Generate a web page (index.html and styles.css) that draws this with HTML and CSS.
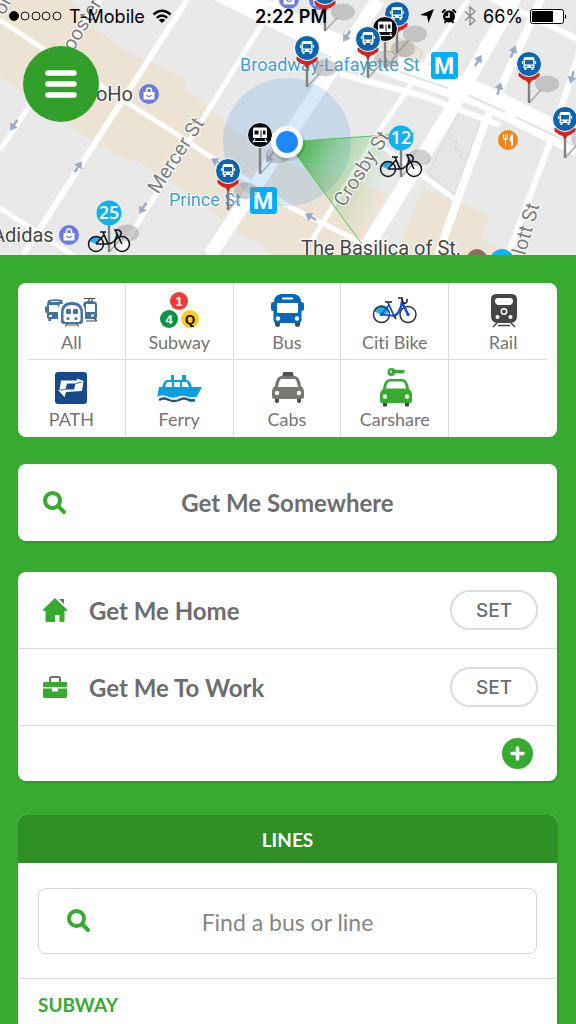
FILE: index.html
```html
<!DOCTYPE html>
<html lang="en">
<head>
    <meta charset="UTF-8">
    <meta name="viewport" content="width=device-width, initial-scale=1.0">
    <title>Transit</title>
    <link rel="stylesheet" href="styles.css">
</head>
<body>

    <header class="hero">
        <svg class="map" viewBox="0 0 576 255" preserveAspectRatio="xMidYMid slice">
            <defs>
                <linearGradient id="beam" gradientUnits="userSpaceOnUse" x1="290" y1="145" x2="385" y2="190">
                    <stop offset="0" stop-color="#2fae2f" stop-opacity="0.95"/>
                    <stop offset="0.45" stop-color="#4fb94a" stop-opacity="0.4"/>
                    <stop offset="1" stop-color="#8fd08a" stop-opacity="0"/>
                </linearGradient>
                <g id="pin-shadow">
                    <path d="M0 39 L12 26" stroke="#a9a9a9" stroke-width="1.5"/>
                    <ellipse cx="18" cy="20" rx="12" ry="8.5" fill="#8a8a8a" fill-opacity="0.4"/>
                    <path d="M0 12 V39" stroke="#808080" stroke-width="2.4"/>
                </g>
                <g id="pin-bus">
                    <use href="#pin-shadow"/>
                    <path d="M-10 9 Q0 16 10 9 L10 12 Q6 16 2 16.500 L0 20 L-2 16.500 Q-6 16 -10 12 Z" fill="#d8201f" stroke="#d8201f"/>
                    <circle r="12.500" fill="#0a64ae" stroke="#fff" stroke-width="1"/>
                    <path fill="#fff" fill-rule="evenodd" d="M-3.500 -7 h7 q2 0 2 2 v9 h-1 v2 h-2 v-2 h-5 v2 h-2 v-2 h-1 v-9 q0 -2 2 -2 z M-4 -4 v4.500 h8 v-4.500 z M-3.800 1.800 v1.200 h1.800 v-1.200 z M2 1.800 v1.200 h1.800 v-1.200 z"/>
                    <path d="M-6.500 -3 v3 M6.500 -3 v3" stroke="#fff" stroke-width="1.200"/>
                </g>
                <g id="pin-train">
                    <use href="#pin-shadow"/>
                    <circle r="12.500" fill="#0a0d14" stroke="#fff" stroke-width="1"/>
                    <path fill="#fff" fill-rule="evenodd" d="M-5.500 -7.500 h11 q1.500 0 1.500 1.500 v9 h-14 v-9 q0 -1.500 1.500 -1.500 z M-5.500 -4.500 v4 h4 v-4 z M0.500 -4.500 v7 h1 v-7 z M3 -4.500 v4 h2.500 v-4 z"/>
                    <path d="M-5 4 L-7 7.500 M5 4 L7 7.500 M-6 6.500 H6" stroke="#fff" stroke-width="1.200"/>
                </g>
                <g id="map-bike" fill="none" stroke="#10131f">
                    <path d="M-20 28 A7.500 7.500 0 0 1 -8 25 L-13 31 Z" fill="#27aee8" stroke="none"/>
                    <circle cx="-13" cy="31" r="7.500" stroke-width="1.500"/>
                    <circle cx="13" cy="31" r="7.500" stroke-width="1.500"/>
                    <path d="M-13 31 L-5 22 L-1 31 H-13 M-1 31 Q7 30 8 21 L13 31 M-6 19 L-1 31 M8 21 L6 17 H10 M10 17 q4 3 1 6 M-9 19 H-3" stroke-width="1.600"/>
                </g>
                <g id="arrow">
                    <path d="M0 6 V-2" stroke="#9aabc4" stroke-width="2.500"/>
                    <path d="M0 -7 L4.500 0 H-4.500 Z" fill="#9aabc4"/>
                </g>
                <g id="shop">
                    <circle r="10" fill="#6a7be0"/>
                    <path d="M-5.500 -2 H5.500 V5.500 H-5.500 Z" fill="#fff"/>
                    <path d="M-2.500 -2 v-1.500 a2.500 2.500 0 0 1 5 0 v1.500" fill="none" stroke="#fff" stroke-width="1.500"/>
                    <path d="M-2.500 1 q2.500 3 5 0" fill="none" stroke="#6a7be0" stroke-width="1.200"/>
                </g>
            </defs>

            <rect width="576" height="255" fill="#e9e9e9"/>

            <!-- commercial blocks -->
            <g fill="#ede3d4">
                <path d="M0 0 H70 L100 32 L125 50 L187 80 L184 86 L228 125 L300 170 L345 175 L388 195 L362 238 L345 255 H273 L233 228 L165 178 L133 158 L131 162 L93 142 L40 104 L0 77 Z"/>
                <path d="M424 188 L489 215 L481 238 L505 250 V255 H395 Z"/>
            </g>
            <path d="M459 112 L481 119 L455 195 L428 173 Z" fill="#e6e6e6" stroke="#d6d6d6"/>
            <path d="M449 138 L457 142 L454 148 L462 152 L459 158" fill="none" stroke="#d6d6d6"/>

            <!-- streets -->
            <g fill="none" stroke="#fff" stroke-width="5">
                <path d="M0 20 L45 50 L170 130 L217 161 L290 207 L362 243"/>
                <path d="M100 0 L0 150"/>
                <path d="M187 0 L23 255" stroke-width="6"/>
                <path d="M277 0 L118 255"/>
                <path d="M378 0 L210 255" stroke-width="14"/>
                <path d="M468 0 L380 130 L312 240"/>
                <path d="M516 -5 L450 112 L362 255" stroke-width="14"/>
                <path d="M543 -5 L484 125 L438 255" stroke-width="8"/>
                <path d="M580 50 L549 145 L508 255" stroke-width="6"/>
                <path d="M0 208 L77 258"/>
                <path d="M370 138 L419 173 L456 200"/>
                <path d="M210 -15 L330 43 L420 75 L480 95 L580 145" stroke-width="24"/>
                <path d="M340 74 L420 95 L500 125" stroke-width="6"/>
                <path d="M485 -5 L580 40" stroke-width="6"/>
            </g>
            <path d="M400 72 L448 88 M468 95 L505 112 M516 117 L580 148" fill="none" stroke="#e4e4e4" stroke-width="2"/>
            <path d="M390 36 L410 42 L423 52 L418 60 L385 50 Z" fill="#ede3d4" stroke="#e0cdb2"/>

            <!-- current location range -->
            <circle cx="287" cy="142" r="64" fill="#4f9be8" fill-opacity="0.22"/>
            <path d="M287 142 L415 133 L362 244 Z" fill="url(#beam)"/>
            <path d="M362 244 L287 142 L415 133" fill="none" stroke="#5cbf5c"/>

            <use href="#arrow" transform="translate(14 125) rotate(213)"/>
            <use href="#arrow" transform="translate(78 167) rotate(33)"/>
            <use href="#arrow" transform="translate(143 208) rotate(213)"/>
            <use href="#arrow" transform="translate(347 36) rotate(213)"/>
            <use href="#arrow" transform="translate(478 61) rotate(30)"/>
            <use href="#arrow" transform="translate(513 52) rotate(22)"/>
            <use href="#arrow" transform="translate(499 89) rotate(15)"/>
            <use href="#arrow" transform="translate(572 77) rotate(195)"/>
            <use href="#arrow" transform="translate(311 217) rotate(-60)"/>
            <use href="#arrow" transform="translate(217 162) rotate(-60)"/>
            <use href="#arrow" transform="translate(270 157) rotate(213)"/>

            <g class="map-label street">
                <text transform="translate(73 52) rotate(-59)">ooster St</text>
                <text transform="translate(158 195) rotate(-57)">Mercer St</text>
                <text transform="translate(344 208) rotate(-57)">Crosby St</text>
                <text transform="translate(525 256) rotate(-74)">lott St</text>
                <text transform="translate(4 16) rotate(-62)">on</text>
            </g>
            <g class="map-label">
                <text x="84" y="101">SoHo</text>
                <text x="-8" y="242">Adidas</text>
                <text x="301" y="255">The Basilica of St.</text>
            </g>
            <g class="map-label station">
                <text x="240" y="71">Broadway-Lafayette St</text>
                <text x="169" y="206">Prince St</text>
            </g>

            <use href="#shop" x="149" y="94"/>
            <use href="#shop" x="69" y="235"/>
            <use href="#shop" x="289" y="-1"/>
            <use href="#shop" x="319" y="0"/>
            <circle cx="508" cy="140" r="10" fill="#f5841f"/>
            <path d="M503 134 v4 q0 2 2 2 v6 h1 v-6 q2 0 2 -2 v-4 h-1 v4 h-1 v-4 h-1 v4 h-1 v-4 z M513 134 v12 h-2 v-5 h-1 q-1 -6 3 -7 z" fill="#fff"/>
            <circle cx="477" cy="259" r="10" fill="#8d6e63"/>
            <circle cx="502" cy="261" r="12" fill="#12b1ea"/>

            <g>
                <rect x="431" y="52" width="27" height="27" rx="3" fill="#00aeff"/>
                <rect x="250" y="187" width="27" height="27" rx="3" fill="#00aeff"/>
                <text class="metro" x="444" y="74">M</text>
                <text class="metro" x="263" y="209">M</text>
            </g>

            <use href="#pin-bus" x="325" y="-8"/>
            <use href="#pin-bus" x="397" y="14"/>
            <use href="#pin-train" x="385" y="29"/>
            <use href="#pin-bus" x="368" y="39"/>
            <use href="#pin-bus" x="307" y="48"/>
            <use href="#pin-bus" x="529" y="64"/>
            <use href="#pin-bus" x="565" y="119"/>
            <use href="#pin-train" x="260" y="135"/>
            <use href="#pin-bus" x="228" y="171"/>

            <use href="#pin-shadow" x="401" y="138"/>
            <use href="#map-bike" x="401" y="138"/>
            <circle cx="401" cy="138" r="12.500" fill="#12b1ea"/>
            <text class="count" x="401" y="144">12</text>
            <use href="#pin-shadow" x="109" y="213"/>
            <use href="#map-bike" x="109" y="213"/>
            <circle cx="109" cy="213" r="12.500" fill="#12b1ea"/>
            <text class="count" x="109" y="219">25</text>

            <circle cx="288" cy="144" r="17" fill="#000" fill-opacity="0.12"/>
            <circle cx="287" cy="142" r="16" fill="#fff"/>
            <circle cx="287" cy="142" r="11" fill="#1e88ff"/>
        </svg>

        <div class="overlay">
            <div class="status">
                <div class="status-side">
                    <svg width="54" height="12" viewBox="0 0 54 12" fill="none" stroke="#111">
                        <circle cx="6" cy="6" r="4.500" fill="#000"/>
                        <circle cx="17" cy="6" r="4"/>
                        <circle cx="28" cy="6" r="4"/>
                        <circle cx="38" cy="6" r="4"/>
                        <circle cx="49" cy="6" r="4"/>
                    </svg>
                    <span>T-Mobile</span>
                    <svg width="20" height="15" viewBox="0 0 20 15" fill="none" stroke="#000" stroke-width="2.400">
                        <path d="M1.500 5.500 Q10 -2 18.500 5.500"/>
                        <path d="M4.800 8.800 Q10 4.200 15.200 8.800"/>
                        <path d="M10 14 L6.800 11 Q10 8.400 13.200 11 Z" fill="#000" stroke="none"/>
                    </svg>
                </div>
                <time class="clock">2:22 PM</time>
                <div class="status-side status-right">
                    <svg width="14" height="14" viewBox="0 0 14 14"><path d="M14 0 L8.500 14 L7 7 L0 6 Z"/></svg>
                    <svg width="16" height="16" viewBox="0 0 16 16">
                        <circle cx="8" cy="8.500" r="6"/>
                        <path d="M1 4.500 L4.500 1.500 M15 4.500 L11.500 1.500 M3.500 15 L5 13 M12.500 15 L11 13" stroke="#000" stroke-width="1.800"/>
                        <path d="M8 4.500 V9 H4.500" fill="none" stroke="#fff" stroke-width="1.500"/>
                    </svg>
                    <svg width="12" height="20" viewBox="0 0 12 20"><path d="M1 5.500 L11 14.500 L6 19 V1 L11 5.500 L1 14.500" fill="none" stroke="#8d8d8d" stroke-width="1.500"/></svg>
                    <span>66%</span>
                    <svg width="38" height="15" viewBox="0 0 38 15">
                        <rect x="0.500" y="0.500" width="33" height="14" rx="2" fill="#fff" stroke="#000"/>
                        <rect x="2" y="2" width="21" height="11"/>
                        <path d="M35 5 q2.500 2.500 0 5 z"/>
                    </svg>
                </div>
            </div>
            <button class="menu" aria-label="Menu">
                <svg width="32" height="30" viewBox="0 0 32 30"><path d="M3 4 H29 M3 15 H29 M3 26 H29" stroke="#fff" stroke-width="5.500" stroke-linecap="round"/></svg>
            </button>
        </div>
    </header>

    <main>
        <nav class="card modes">
            <a class="mode" href="#all">
                <svg class="mode-icon" viewBox="0 0 64 40">
                    <g fill="#44739f">
                        <path fill-rule="evenodd" d="M10 10 q7 -1.500 13 0 l1 4 h-3 l-2 4 v11 h-9 q-2 0 -2 -2 v-4 q-2 0 -2 -2 v-4 l2 -1 q0 -5 2 -6 z M12 11 v1 h8 v-1 z M10 15 v7 h9 v-7 z M10 25 v2 h3 v-2 z"/>
                        <path fill-rule="evenodd" d="M25 34 q-3 0 -3 -3 v-8 q0 -11 11 -11 t11 11 v8 q0 3 -3 3 z M27 32 h12 q2.500 0 2.500 -3 v-6 q0 -8 -8.500 -8 t-8.500 8 v6 q0 3 2.500 3 z"/>
                        <rect x="27" y="19" width="5" height="5" rx="1"/>
                        <rect x="34" y="19" width="5" height="5" rx="1"/>
                        <circle cx="29" cy="28.500" r="1.500"/>
                        <circle cx="37" cy="28.500" r="1.500"/>
                        <path fill-rule="evenodd" d="M45 12 q6 -2 12 0 l1 2 v13 q0 2 -2 2 h-10 v-6 q0 -6 -2 -8 z M47 14 v8 h9 v-8 z M52 24.500 v2 h3 v-2 z"/>
                    </g>
                    <path d="M45 8.500 H56 M50 8.500 v3 M53 8.500 v3 M10 29 v2 M11.500 29 v2 M28 34 L26 36.500 M38 34 L40 36.500 M27 35 H39 M47 31 H57 M55 28 L58 31" fill="none" stroke="#4a4a4a" stroke-width="1.200"/>
                </svg>
                <span>All</span>
            </a>
            <a class="mode" href="#subway">
                <svg class="mode-icon" viewBox="0 0 64 40">
                    <circle cx="32" cy="11" r="9" fill="#ee3a36"/>
                    <circle cx="22" cy="29" r="9" fill="#0a9640"/>
                    <circle cx="43" cy="29" r="9" fill="#fccb15"/>
                    <text class="bullet" x="32" y="16">1</text>
                    <text class="bullet" x="22" y="34">4</text>
                    <text class="bullet bullet-dark" x="43" y="34">Q</text>
                </svg>
                <span>Subway</span>
            </a>
            <a class="mode" href="#bus">
                <svg class="mode-icon" viewBox="0 0 64 40">
                    <path d="M20 32 h5 v3 q0 2 -2.500 2 t-2.500 -2 z M40 32 h5 v3 q0 2 -2.500 2 t-2.500 -2 z" fill="#4a4a4a"/>
                    <path fill="#0868b5" fill-rule="evenodd" d="M26 4 h13 q7 1 7 8 q3 0 3 2 v5 q0 2 -2.500 2 v9 q0 3 -3 3 h-22 q-3 0 -3 -3 v-9 q-2.500 0 -2.500 -2 v-5 q0 -2 3 -2 q0 -7 7 -8 z M27 7.500 v2 h11 v-2 z M22 13 v9 q0 1 1 1 h19 q1 0 1 -1 v-9 z"/>
                    <circle cx="23" cy="28.500" r="2.200" fill="#fff"/>
                    <circle cx="42" cy="28.500" r="2.200" fill="#fff"/>
                </svg>
                <span>Bus</span>
            </a>
            <a class="mode" href="#citibike">
                <svg class="mode-icon" viewBox="0 0 64 40" fill="none">
                    <path d="M10.500 21 A8.500 8.500 0 0 1 25 18 L25 23 L19 25 Z" fill="#1fb3e8"/>
                    <circle cx="18.500" cy="24.500" r="8" stroke="#333" stroke-width="1.500"/>
                    <circle cx="45" cy="24.500" r="8" stroke="#333" stroke-width="1.500"/>
                    <path d="M18.500 24.500 L26 15 L31 26 Z M26 15 L25 12" stroke="#1550d8" stroke-width="1.800"/>
                    <path d="M30 26 Q37 25 39 12 L45 24.500" stroke="#1550d8" stroke-width="2.500"/>
                    <circle cx="18.500" cy="24.500" r="1.700" fill="#1550d8"/>
                    <circle cx="45" cy="24.500" r="1.700" fill="#1550d8"/>
                    <path d="M22 12 H29 M35 8 h4 l1 5 M40 13 q5 1 4 -4 M31 26 l2 3" stroke="#222" stroke-width="1.600"/>
                </svg>
                <span>Citi Bike</span>
            </a>
            <a class="mode" href="#rail">
                <svg class="mode-icon" viewBox="0 0 64 40">
                    <path fill="#454545" fill-rule="evenodd" d="M26 4 h14 q6 0 6 5 v17 q0 6 -6 7 h-14 q-6 -1 -6 -7 v-17 q0 -5 6 -5 z M27 8 q-3 0 -3 3 t3 4 h12 q3 -1 3 -4 t-3 -3 z"/>
                    <circle cx="33" cy="21.500" r="2.700" fill="none" stroke="#fff" stroke-width="1.500"/>
                    <circle cx="26.500" cy="27" r="2" fill="#fff"/>
                    <circle cx="39.500" cy="27" r="2" fill="#fff"/>
                    <path d="M26 33 L22 37 M40 33 L44 37 M27 35.500 H39" stroke="#454545" stroke-width="1.500"/>
                </svg>
                <span>Rail</span>
            </a>
            <a class="mode" href="#path">
                <svg class="mode-icon" viewBox="0 0 64 40">
                    <rect x="16" y="5" width="32" height="32" rx="3" fill="#174a8c"/>
                    <path fill="#fff" fill-rule="evenodd" d="M22 13.500 H38 V11.500 L44.500 14 L43 24 L27 25 L25.500 30 L19 23 H20.500 Z M28 16.500 L26.500 22.500 H35 L36.500 16.500 Z"/>
                    <path d="M20.500 23 L27 22.500 M36.500 16.500 L43 15" stroke="#174a8c" stroke-width="0.800"/>
                </svg>
                <span>PATH</span>
            </a>
            <a class="mode" href="#ferry">
                <svg class="mode-icon" viewBox="0 0 64 40">
                    <path fill="#0b9fe0" fill-rule="evenodd" d="M12 20 h3 l2 -5 q1 -2 3 -2 h4 v-5 h3 v5 h8 v-5 h4 v5 q3 0 4 2 l2 5 h10 l-6 11 q-4 1 -8 0 q-5 -2 -10 0 q-6 2 -10 0 q-5 -2 -11 0 z M20 15 l-2 5 h7 v-5 z M27 15 v5 h6 v-5 z M35 15 v5 h7 l-2 -5 z"/>
                    <path d="M10 30.500 q6 -3 11 0 q5 2 10 0 q5 -2 10 0 q4 1 8 0" fill="none" stroke="#fff" stroke-width="1.500"/>
                    <path d="M12 33 q5 -3 10 0 q5 2 10 0 q5 -3 10 0 q3 1 6 0" fill="none" stroke="#28527f" stroke-width="2.400"/>
                </svg>
                <span>Ferry</span>
            </a>
            <a class="mode" href="#cabs">
                <svg class="mode-icon" viewBox="0 0 64 40">
                    <path d="M20 30 h4 v5 q-2 2 -4 0 z M42 30 h4 v5 q-2 2 -4 0 z M27 10 l1 -4 q0 -1 1 -1 h8 q1 0 1 1 l1 4 z" fill="#505050"/>
                    <path fill="#787774" fill-rule="evenodd" d="M26 9 h14 q5 1 6 10 q3 2 3 5 v5 q0 3 -2 3 h-28 q-2 0 -2 -3 v-5 q0 -3 3 -5 q1 -9 6 -10 z M26 12 q-2 1 -3 8 h20 q-1 -7 -3 -8 z"/>
                    <circle cx="22" cy="26" r="2.200" fill="#fff"/>
                    <circle cx="44" cy="26" r="2.200" fill="#fff"/>
                </svg>
                <span>Cabs</span>
            </a>
            <a class="mode" href="#carshare">
                <svg class="mode-icon" viewBox="0 0 64 40">
                    <path d="M20 34 h4 v5 q-2 1 -4 0 z M42 34 h4 v5 q-2 1 -4 0 z" fill="#454545"/>
                    <path fill="#37ab2f" fill-rule="evenodd" d="M26 12 h14 q5 1 6 10 q3 2 3 5 v6 q0 3 -2 3 h-28 q-2 0 -2 -3 v-6 q0 -3 3 -5 q1 -9 6 -10 z M27 14.500 q-3 0 -4 7 h20 q-1 -7 -4 -7 z"/>
                    <circle cx="22" cy="29.500" r="2.200" fill="#fff"/>
                    <circle cx="44" cy="29.500" r="2.200" fill="#fff"/>
                    <path fill="#37ab2f" fill-rule="evenodd" d="M28.500 1 q3 0 4 2 h9 v3 h-2 v1 h-1 v-1 h-1 v1 h-1 v-1 h-4 q-1 3 -4 3 q-4 0 -4 -4 t4 -4 z M27 3.500 v2.500 h1.500 v-2.500 z"/>
                </svg>
                <span>Carshare</span>
            </a>
        </nav>

        <button class="card somewhere">
            <svg class="icon" viewBox="0 0 26 26"><circle cx="10.500" cy="10.500" r="7.500"/><path d="M16 16 L22 22"/></svg>
            <span>Get Me Somewhere</span>
        </button>

        <section class="card places">
            <div class="place">
                <svg class="icon-fill" viewBox="0 0 26 26">
                    <path d="M17 2 h5 v5 z" fill="#6d6d6d"/>
                    <path d="M13 1 L25 12.500 q0 1.500 -1 1.500 h-1.500 v10 q0 1 -1 1 h-4 v-7 h-4.500 v7 h-8.500 q-1 0 -1 -1 v-10 h-1.500 q-1 0 -1 -1.500 z" fill="#37ab2f"/>
                </svg>
                <span class="place-name">Get Me Home</span>
                <button class="set" aria-label="Set home">SET</button>
            </div>
            <div class="place">
                <svg class="icon-fill" viewBox="0 0 26 26">
                    <path d="M8 8 V5 q0 -2 2 -2 h6 q2 0 2 2 V8" fill="none" stroke="#6d6d6d" stroke-width="2"/>
                    <path d="M2 8 h22 q1 0 1 1 v4 h-24 v-4 q0 -1 1 -1 z M1 14.500 h9 v3 h6 v-3 h9 v8 q0 1.500 -2 1.500 h-20 q-2 0 -2 -1.500 z" fill="#37ab2f"/>
                </svg>
                <span class="place-name">Get Me To Work</span>
                <button class="set" aria-label="Set work">SET</button>
            </div>
            <div class="place-add">
                <button class="add" aria-label="Add place">
                    <svg width="31" height="31" viewBox="0 0 31 31"><path d="M15.500 10 V21 M10 15.500 H21" stroke="#fff" stroke-width="3.600" stroke-linecap="round"/></svg>
                </button>
            </div>
        </section>

        <section class="card lines">
            <h2 class="lines-title">Lines</h2>
            <label class="finder">
                <svg class="icon" viewBox="0 0 26 26"><circle cx="10.500" cy="10.500" r="7.500"/><path d="M16 16 L22 22"/></svg>
                <input type="text" placeholder="Find a bus or line" aria-label="Find a bus or line">
            </label>
            <h3 class="lines-group">Subway</h3>
        </section>
    </main>

</body>
</html>
```

FILE: styles.css
```css
* {
    box-sizing: border-box;
}

body {
    display: flex;
    flex-direction: column;
    min-height: 100vh;
    margin: 0;
    background-color: #37ab2f;
    color: #6d6d6d;
    font-family: 'Lato', 'Open Sans', sans-serif;
    font-variant-ligatures: none;
}

button,
input {
    font-family: inherit;
    color: inherit;
}

button {
    padding: 0;
    border: none;
    cursor: pointer;
}

/* map */
.hero {
    display: grid;
    overflow: hidden;
}

.map,
.overlay {
    grid-area: 1 / 1;
}

.map {
    display: block;
    width: 100%;
    height: 255px;
}

.map-label {
    font-family: 'Roboto', sans-serif;
    font-size: 20px;
    fill: #454545;
    stroke: #fff;
    stroke-width: 2px;
    stroke-linejoin: round;
    paint-order: stroke;
}

.street {
    fill: #7d7d7d;
}

.station {
    font-size: 18px;
    fill: #3d9fd6;
}

.metro {
    font-family: 'Roboto', sans-serif;
    font-size: 23px;
    font-weight: bold;
    fill: #fff;
    text-anchor: middle;
}

.count {
    font-family: 'Open Sans', sans-serif;
    font-size: 18px;
    font-weight: 600;
    fill: #fff;
    text-anchor: middle;
}

.overlay {
    display: flex;
    flex-direction: column;
    align-items: flex-start;
    gap: 14px;
}

.status {
    display: grid;
    grid-template-columns: 1fr auto 1fr;
    align-items: center;
    width: 100%;
    height: 32px;
    padding: 0 8px;
    color: #000;
    font-family: 'Inter', sans-serif;
    font-size: 18px;
}

.status-side {
    display: flex;
    align-items: center;
    gap: 7px;
}

.status-right {
    justify-content: flex-end;
}

.clock {
    padding-left: 6px;
    font-weight: 600;
}

.menu {
    display: flex;
    align-items: center;
    justify-content: center;
    width: 76px;
    height: 76px;
    margin-left: 23px;
    border-radius: 50%;
    background-color: #339f2b;
}

/* cards */
main {
    display: flex;
    flex: 1;
    flex-direction: column;
    padding: 28px 19px 0 18px;
}

.card {
    border-radius: 8px;
    background-color: white;
    box-shadow: 1px 2px 2px rgba(0, 0, 0, 0.12);
}

.modes {
    display: grid;
    grid-template-columns: repeat(5, 1fr);
    margin-bottom: 27px;
    box-shadow: none;
}

.mode {
    display: flex;
    flex-direction: column;
    align-items: center;
    gap: 2px;
    height: 77px;
    padding-top: 7px;
    border-right: 1px solid #dcdcdc;
    color: #747474;
    font-size: 18px;
    line-height: 20px;
    text-decoration: none;
}

.mode:nth-child(5) {
    border-right: none;
}

.mode:nth-child(-n+5) {
    background: linear-gradient(#dcdcdc, #dcdcdc) bottom / 100% 1px no-repeat;
}

.mode:nth-child(1) {
    background-position: 10px bottom;
}

.mode:nth-child(5) {
    background-position: -10px bottom;
}

.mode-icon {
    width: 64px;
    height: 40px;
}

.bullet {
    font-family: 'Liberation Sans', sans-serif;
    font-size: 13px;
    font-weight: bold;
    fill: #fff;
    text-anchor: middle;
}

.bullet-dark {
    fill: #000;
}

.icon,
.icon-fill {
    width: 26px;
    height: 26px;
}

.icon {
    fill: none;
    stroke: #37ab2f;
    stroke-width: 4px;
    stroke-linecap: round;
}

.somewhere {
    display: grid;
    align-items: center;
    height: 77px;
    margin-bottom: 31px;
    font-size: 24px;
    font-weight: bold;
}

.somewhere > * {
    grid-area: 1 / 1;
}

.somewhere .icon {
    margin-left: 24px;
}

.places {
    margin-bottom: 34px;
}

.place {
    display: flex;
    align-items: center;
    gap: 21px;
    height: 77px;
    padding: 0 19px 0 24px;
    border-bottom: 1px solid #dcdcdc;
}

.place-name {
    flex: 1;
    font-size: 24px;
    font-weight: bold;
}

.set {
    width: 88px;
    height: 40px;
    border: 2px solid #dcdcdc;
    border-radius: 20px;
    background-color: white;
    font-family: 'Inter', sans-serif;
    font-size: 19px;
    font-weight: 500;
}

.place-add {
    display: flex;
    align-items: center;
    justify-content: flex-end;
    height: 55px;
    padding-right: 24px;
}

.add {
    width: 31px;
    height: 31px;
    border-radius: 50%;
    background-color: #37ab2f;
}

/* lines */
.lines {
    flex: 1;
    border-radius: 8px 8px 0 0;
}

.lines-title {
    margin: 0;
    padding-top: 2px;
    border-radius: 8px 8px 0 0;
    background-color: #2e8f27;
    color: white;
    font-size: 19px;
    line-height: 46px;
    text-align: center;
    text-transform: uppercase;
}

.finder {
    display: grid;
    align-items: center;
    padding: 25px 20px 24px;
    border-bottom: 1px solid #dcdcdc;
}

.finder > * {
    grid-area: 1 / 1;
}

.finder .icon {
    z-index: 1;
    margin-left: 28px;
}

.finder input {
    width: 100%;
    height: 66px;
    padding: 2px 0 0;
    border: 1px solid #d4d4d4;
    border-radius: 8px;
    background-color: white;
    font-size: 23px;
    text-align: center;
}

.finder input::placeholder {
    color: #858585;
}

.lines-group {
    margin: 0;
    padding: 14px 20px 6px;
    color: #37ab2f;
    font-size: 19px;
    line-height: 24px;
    text-transform: uppercase;
}
```
